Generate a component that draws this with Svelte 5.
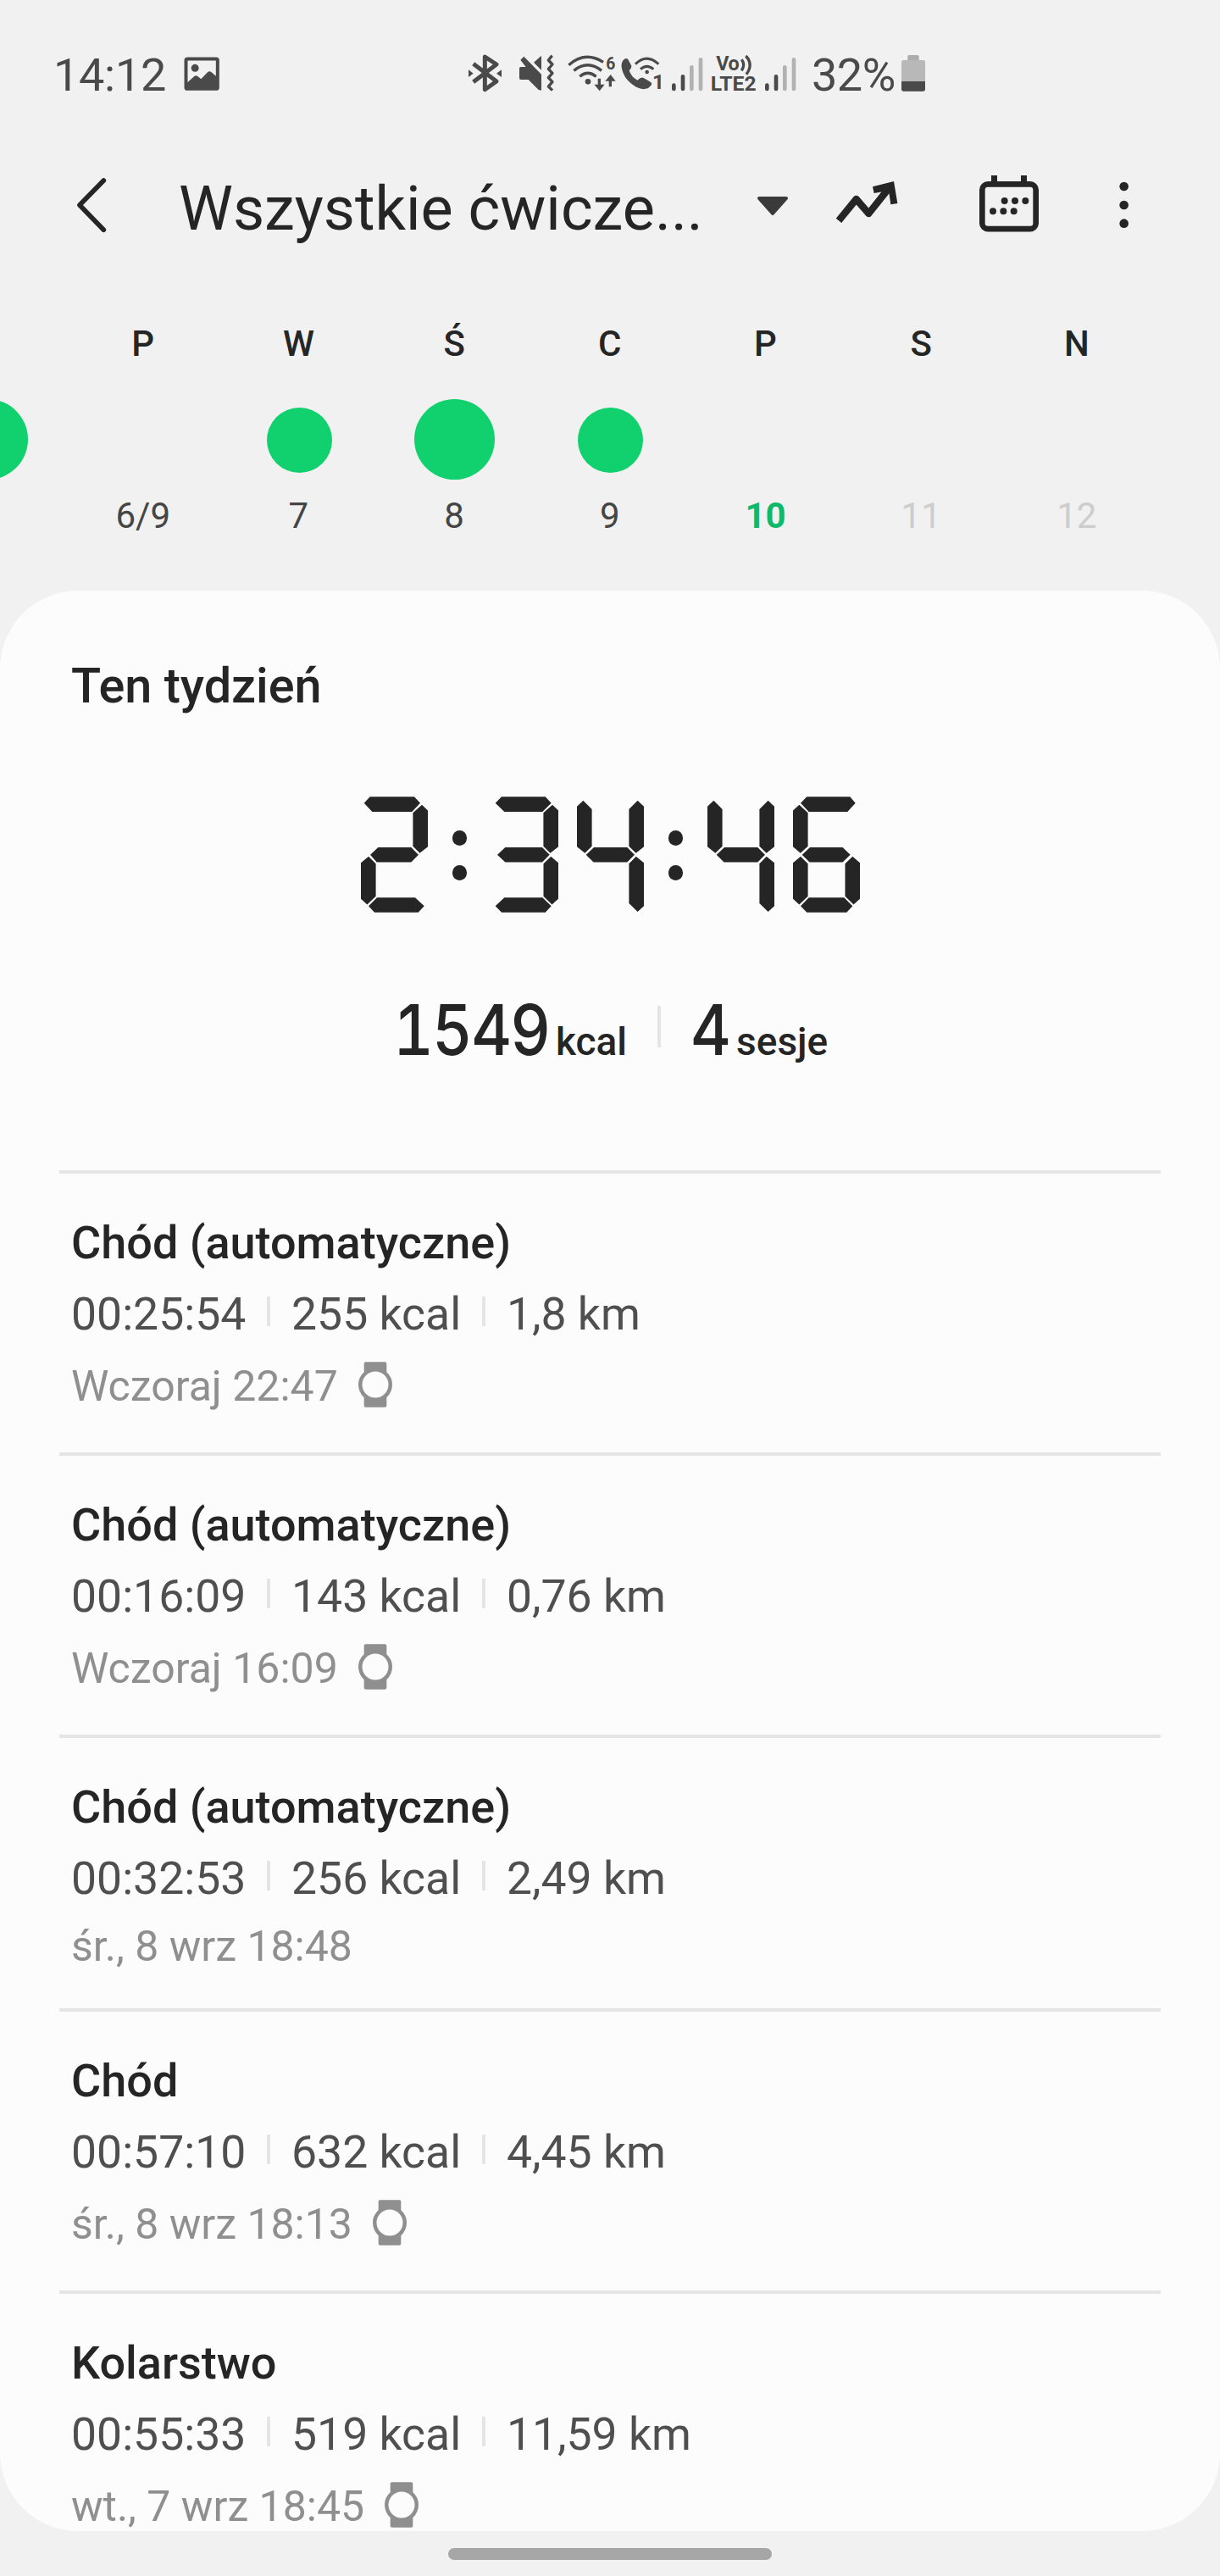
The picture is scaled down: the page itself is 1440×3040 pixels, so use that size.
<script>
  const days = [
    { letter: '', date: '', dot: 95 },
    { letter: 'P', date: '6/9' },
    { letter: 'W', date: '7', dot: 77 },
    { letter: 'Ś', date: '8', dot: 95 },
    { letter: 'C', date: '9', dot: 77 },
    { letter: 'P', date: '10', state: 'today' },
    { letter: 'S', date: '11', state: 'future' },
    { letter: 'N', date: '12', state: 'future' },
  ];

  // Lit segments of each display cell, as clip polygons inside a 79x137 box.
  const upperRight = '72 9.7,79 16.5,79 59.3,69.5 66.8,61.4 58.7,61.4 19.3';
  const lowerRight = '70.3 70.7,79 78.3,79 120.7,71.5 127.4,61.5 117.7,61.5 79.3';
  const lowerLeft = '9 70.7,17.6 79.3,17.6 117.7,7.4 127.4,0 120.7,0 78.3';
  const cells = {
    2: [
      '3.7 7.7,10.7 .3,63 .3,70 7.7,60.3 18,13.3 18',
      upperRight,
      '11 68.7,20.3 60,59.3 60,68 68.7,59.3 77.4,18.7 77.4',
      lowerLeft,
      '9 129.3,19 119.3,64 119.3,74.7 129.3,67.7 136.8,16 136.8',
    ],
    3: [
      '4.7 7.7,12 .3,63.7 .3,70.7 7.7,60.3 18,15.3 18',
      upperRight,
      '7 68.7,16.3 60,60 60,68.7 68.7,60 77.4,16.3 77.4',
      lowerRight,
      '4.7 129.3,15.3 119.3,60.3 119.3,70.7 129.3,63.7 136.8,12 136.8',
    ],
    4: [
      '7.4 4.7,17.6 15,17.6 58.7,9.4 66.8,0 59.3,0 11.7',
      '71.6 4.7,79 11.7,79 59.3,69.6 66.8,61.4 58.7,61.4 15',
      '10.7 68.7,20 60,59.3 60,68 68.7,59.3 77.4,19.5 77.4',
      '69.7 70.7,79 78.3,79 129.3,71.6 136,61.4 126,61.4 79.3',
    ],
    6: [
      '9 7.7,16.3 .3,67.3 .3,73.7 7.7,64.3 18,18.6 18',
      '7.4 9.7,17.6 19.3,17.6 58.7,8.8 66.8,0 59.3,0 16.5',
      '10.7 68.7,20 60,58.6 60,67.7 68.7,58.6 77.4,19.5 77.4',
      lowerLeft,
      lowerRight,
      '9 129.3,18.7 119.3,60.3 119.3,70.3 129.3,63.3 136.8,16.3 136.8',
    ],
  };
  const clip = (points) =>
    'polygon(' +
    points
      .split(',')
      .map((p) => p.split(' ').map((n) => n + 'px').join(' '))
      .join(',') +
    ')';
  const groups = [['2'], ['3', '4'], ['4', '6']];

  const sessions = [
    { name: 'Chód (automatyczne)', stats: ['00:25:54', '255 kcal', '1,8 km'], when: 'Wczoraj 22:47', watch: true },
    { name: 'Chód (automatyczne)', stats: ['00:16:09', '143 kcal', '0,76 km'], when: 'Wczoraj 16:09', watch: true },
    { name: 'Chód (automatyczne)', stats: ['00:32:53', '256 kcal', '2,49 km'], when: 'śr., 8 wrz 18:48', watch: false },
    { name: 'Chód', stats: ['00:57:10', '632 kcal', '4,45 km'], when: 'śr., 8 wrz 18:13', watch: true },
    { name: 'Kolarstwo', stats: ['00:55:33', '519 kcal', '11,59 km'], when: 'wt., 7 wrz 18:45', watch: true },
  ];
</script>

{#snippet signal(width)}
  <svg {width} height="80" viewBox="0 0 150 240" fill="none" stroke-width="14" stroke-linecap="round">
    <path d="M31 152v13M63 121v44" stroke="#4a4a4a" />
    <path d="M94 88v77M126 61v104" stroke="#b2b2b2" />
  </svg>
{/snippet}

<div class="screen">
  <header class="status">
    <span class="time">14:12</span>
    <svg class="picture" width="50" height="80" viewBox="520 30 150 240">
      <rect x="539.500" y="88.500" width="112" height="106" rx="5" fill="none" stroke="#4a4a4a" stroke-width="12" />
      <circle cx="571.500" cy="121" r="13.500" fill="#4a4a4a" />
      <path d="M540 176l29-26q6-5 12 0l12 10 23-24q7-6 14 0l20 17v44H540z" fill="#4a4a4a" />
    </svg>
    <div class="indicators">
      <svg width="50" height="80" viewBox="30 0 150 240">
        <path d="M56 76l82 62-41 29V51l41 27-82 62" fill="none" stroke="#4a4a4a" stroke-width="15" stroke-linejoin="round" />
        <path d="M39 97l17 13-17 13zM156 97l-18 13 18 13z" fill="#4a4a4a" />
      </svg>
      <svg width="60" height="80" viewBox="180 0 180 240" fill="#4a4a4a">
        <path d="M297 47v51l-27-27zM219 92q0-5 5-5h18l-19-25 12-12 62 63v57l-10-2-36-36h-27q-5 0-5-5z" />
        <path d="M335 47l-13 16 14 15-14 16 14 15-14 16 14 15-14 16 14 14" fill="none" stroke="#4a4a4a" stroke-width="10" stroke-linejoin="round" />
      </svg>
      <svg width="70" height="80" viewBox="360 0 210 240" fill="none" stroke="#4a4a4a" stroke-width="10">
        <path d="M394 80Q452 29 516 70M412 100Q461 61 510 100M433 121Q461 97 491 121" />
        <circle cx="462" cy="139" r="10" fill="#4a4a4a" stroke="none" />
        <path d="M502 128v28M541 157v-28" />
        <path d="M484 149h37l-18 23zM523 137h37l-18-23z" fill="#4a4a4a" stroke="none" />
        <text class="badge" x="526" y="95" font-size="58">6</text>
      </svg>
      <svg width="55" height="80" viewBox="570 0 165 240" fill="none" stroke="#4a4a4a" stroke-width="9">
        <path d="M590 60q9-7 14 1l11 20q4 8-7 18 6 22 29 35 14-13 22-8l24 14q8 4 2 13-18 22-52 5-45-25-52-70-2-18 9-28z" fill="#4a4a4a" stroke="none" />
        <path d="M630 77Q670 38 712 77M648 95Q670 75 694 95" />
        <circle cx="671" cy="105" r="7" fill="#4a4a4a" stroke="none" />
        <text class="badge" x="690" y="165" font-size="74">1</text>
      </svg>
      {@render signal(50)}
      <svg width="60" height="80" viewBox="15 0 180 240">
        <text class="badge" x="46" y="100" font-size="70" textLength="82">Vo</text>
        <text class="badge" x="26" y="171" font-size="72" textLength="162" lengthAdjust="spacingAndGlyphs">LTE2</text>
        <path d="M136 61q14 18 0 39M151 48q28 30 2 65" fill="none" stroke="#4a4a4a" stroke-width="10" />
      </svg>
      {@render signal(50)}
      <span class="percent">32%</span>
      <svg width="35" height="80" viewBox="690 0 105 240">
        <path d="M724 65V50q0-5 5-5h30q5 0 5 5v15z" fill="#acacac" />
        <rect x="702" y="63" width="84" height="110" rx="7" fill="#b8b8b8" />
        <path d="M702 138h84v28q0 7-7 7h-70q-7 0-7-7z" fill="#4a4a4a" />
      </svg>
    </div>
  </header>

  <nav class="toolbar">
    <svg width="141" height="110" viewBox="90 450 423 330">
      <path d="M247 519l-85 87 85 88" fill="none" stroke="#252525" stroke-width="17" stroke-linecap="round" stroke-linejoin="round" />
    </svg>
    <h1>Wszystkie ćwicze...</h1>
    <svg width="60" height="110" viewBox="0 0 180 330">
      <path d="M48 132h96l-48 54z" fill="#3a3a3a" stroke="#3a3a3a" stroke-width="12" stroke-linejoin="round" />
    </svg>
    <svg width="140" height="110" viewBox="180 0 420 330">
      <path d="M330 211l62-76 44 51 75-94" fill="none" stroke="#252525" stroke-width="25" stroke-linejoin="round" />
      <path d="M450 91l75-19 13 78-24 4-7-49-52 9z" fill="#252525" />
    </svg>
    <svg width="200" height="110" viewBox="600 0 600 330" fill="#252525">
      <rect x="838" y="82" width="190" height="158.500" rx="20" fill="none" stroke="#252525" stroke-width="20" />
      <path d="M870 51h21v26h-21zM975 51h21v26h-21z" />
      <circle cx="917" cy="141" r="12" /><circle cx="954" cy="141" r="12" /><circle cx="991" cy="141" r="12" />
      <circle cx="876" cy="178" r="12" /><circle cx="913" cy="178" r="12" /><circle cx="950" cy="178" r="12" />
    </svg>
    <svg width="100" height="110" viewBox="1200 0 300 330" fill="#252525">
      <circle cx="1340" cy="90" r="16" /><circle cx="1340" cy="156" r="16" /><circle cx="1340" cy="221" r="16" />
    </svg>
  </nav>

  <section class="week">
    {#each days as day}
      <div class="day">
        <span class="letter">{day.letter}</span>
        <span class="ring">
          {#if day.dot}<i class="dot" class:small={day.dot < 90}></i>{/if}
        </span>
        <span class="date {day.state ?? ''}">{day.date}</span>
      </div>
    {/each}
  </section>

  <main class="card">
    <h2>Ten tydzień</h2>
    <div class="clock" role="img" aria-label="2:34:46">
      {#each groups as group, i}
        {#if i > 0}<div class="colon"><i></i><i></i></div>{/if}
        <div class="pair">
          {#each group as digit}
            <div class="cell">
              {#each cells[digit] as segment}
                <i style:clip-path={clip(segment)}></i>
              {/each}
            </div>
          {/each}
        </div>
      {/each}
    </div>
    <div class="totals">
      <span class="amount kcal">1549</span><span class="unit">kcal</span>
      <i class="bar"></i>
      <span class="amount">4</span><span class="unit">sesje</span>
    </div>

    <ul>
      {#each sessions as s}
        <li>
          <h3>{s.name}</h3>
          <div class="stats">
            {#each s.stats as value, i}
              {#if i > 0}<i></i>{/if}
              <span>{value}</span>
            {/each}
          </div>
          <div class="when" class:tall={s.watch}>
            <span>{s.when}</span>
            {#if s.watch}
              <svg width="40" height="54" viewBox="0 0 120 162">
                <path d="M20 7q0-6 6-6h68q6 0 6 6v30q20 18 20 44t-20 46v28q0 6-6 6H26q-6 0-6-6v-28Q0 107 0 81t20-44z" fill="#8f8f8f" />
                <circle cx="60" cy="81" r="46.500" fill="#fcfcfc" />
              </svg>
            {/if}
          </div>
        </li>
      {/each}
    </ul>
  </main>
  <footer><i class="handle"></i></footer>
</div>

<style>
  :global(body) {
    margin: 0;
    background: #f1f1f1;
  }
  .screen {
    width: 1440px;
    height: 3040px;
    overflow: hidden;
    display: flex;
    flex-direction: column;
    background: #f1f1f1;
    color: #252525;
    font-family: Roboto, 'Liberation Sans', sans-serif;
  }
  svg {
    display: block;
    flex: none;
  }
  h1,
  h2,
  h3,
  ul {
    margin: 0;
    padding: 0;
  }
  .status {
    display: flex;
    flex: none;
    height: 80px;
    padding: 50px 0 0 63px;
    color: #4a4a4a;
    font-size: 54px;
    line-height: 77px;
  }
  .time {
    width: 150px;
    letter-spacing: -0.3px;
  }
  .indicators {
    display: flex;
    margin-left: 287px;
  }
  .percent {
    width: 102px;
    padding-left: 13px;
    letter-spacing: -0.5px;
    white-space: nowrap;
  }
  .badge {
    font-family: Roboto, sans-serif;
    font-weight: 700;
    fill: #4a4a4a;
    stroke: none;
  }
  .toolbar {
    display: flex;
    flex: none;
    height: 110px;
    margin-top: 60px;
    padding-left: 70px;
  }
  h1 {
    width: 669px;
    font-size: 72px;
    font-weight: 400;
    line-height: 113px;
    white-space: nowrap;
  }
  .week {
    display: grid;
    flex: none;
    grid-template-columns: repeat(8, 183.7px);
    margin-left: -106.8px;
    height: 321px;
    padding-top: 76px;
    font-size: 42px;
    line-height: 60px;
    text-align: center;
  }
  .day {
    display: flex;
    flex-direction: column;
    align-items: center;
  }
  .letter {
    height: 60px;
    font-weight: 500;
  }
  .ring {
    display: grid;
    place-items: center;
    height: 110px;
    margin: 27px 0 6px;
  }
  .dot {
    width: 95px;
    height: 95px;
    border-radius: 50%;
    background: #11d16e;
  }
  .dot.small {
    width: 77px;
    height: 77px;
    margin: 2px 0 0 2px;
  }
  .date {
    color: #454545;
  }
  .today {
    color: #0fb96b;
    font-weight: 700;
  }
  .future {
    color: #cdcdcd;
  }
  .card {
    box-sizing: border-box;
    flex: none;
    height: 2290px;
    padding: 72px 70px 0;
    overflow: hidden;
    border-radius: 92px;
    background: #fcfcfc;
  }
  h2 {
    padding-left: 14px;
    font-size: 57.6px;
    font-weight: 500;
    line-height: 81px;
    height: 80px;
  }
  .clock {
    display: flex;
    height: 137px;
    margin: 91px 0 0 356px;
  }
  .pair {
    display: flex;
    gap: 22px;
  }
  .cell {
    display: grid;
    width: 79px;
    height: 137px;
  }
  .cell i {
    grid-area: 1 / 1;
    background: #252525;
  }
  .colon {
    display: flex;
    flex-direction: column;
    align-items: center;
    gap: 23.6px;
    width: 75px;
    padding-top: 39.8px;
  }
  .colon i {
    width: 17.8px;
    height: 17.8px;
    border-radius: 50%;
    background: #252525;
  }
  .totals {
    display: flex;
    align-items: baseline;
    height: 100px;
    margin: 88px 0 116px;
    padding-left: 394px;
    line-height: 100px;
  }
  .amount {
    flex: none;
    width: 54px;
    font-family: Inter, Roboto, sans-serif;
    font-size: 83px;
    font-weight: 500;
    font-variant-numeric: tabular-nums;
    letter-spacing: -2px;
    transform: scaleX(0.89);
    transform-origin: left;
  }
  .kcal {
    width: 192px;
  }
  .unit {
    font-size: 46px;
    font-weight: 500;
  }
  .bar {
    align-self: flex-start;
    flex: none;
    width: 4px;
    height: 49px;
    margin: 22px 35px 0 36px;
    background: #e5e5e5;
  }
  ul {
    list-style: none;
  }
  li {
    padding: 40px 14px 43px;
    border-top: 4px solid #e5e5e5;
  }
  h3 {
    font-size: 54px;
    font-weight: 500;
    line-height: 84px;
  }
  .stats {
    display: flex;
    height: 84px;
    color: #4f4f4f;
    font-size: 53.5px;
    line-height: 83px;
  }
  .stats i {
    width: 4px;
    height: 35px;
    margin: 21px 25.2px 0 24.5px;
    background: #e5e5e5;
  }
  .when {
    display: flex;
    align-items: center;
    height: 60px;
    margin-top: 8px;
    color: #8f8f8f;
    font-size: 50px;
    line-height: 60px;
  }
  .when.tall {
    height: 70px;
  }
  .when svg {
    margin: 0 0 5px 24px;
  }
  footer {
    display: flex;
    justify-content: center;
    padding-top: 20px;
  }
  .handle {
    width: 382px;
    height: 14px;
    border-radius: 7px;
    background: #a6a6a6;
  }
</style>
